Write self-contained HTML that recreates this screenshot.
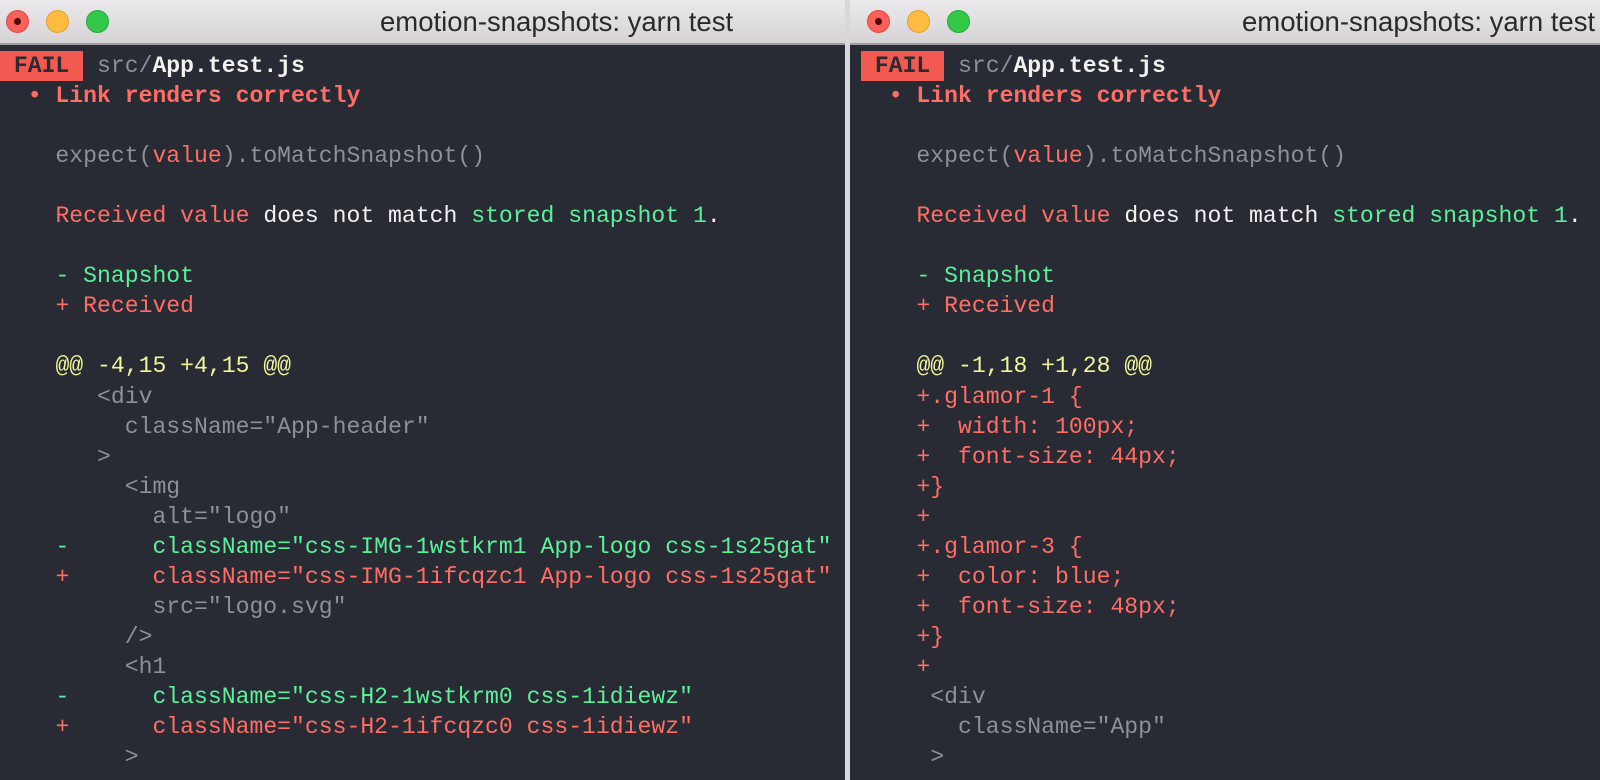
<!DOCTYPE html>
<html><head><meta charset="utf-8"><style>
html,body{margin:0;padding:0;width:1600px;height:780px;overflow:hidden;background:#282b34}
.win{position:absolute;top:0;height:780px;overflow:hidden;background:#282b34}
.tb{position:absolute;left:0;right:0;top:0;height:43px;background:linear-gradient(#ebe9eb,#d5d3d5);border-bottom:2px solid #9f9d9f}
.dot{position:absolute;top:10px;width:23px;height:23px;border-radius:50%;box-sizing:border-box}
.r{background:#fc605b;border:1px solid #de4b45}.r::after{content:"";position:absolute;left:7px;top:7px;width:7px;height:7px;border-radius:50%;background:#4d0000}
.y{background:#fdbc40;border:1px solid #dea23a}.g{background:#34c84a;border:1px solid #27a83a}
.title{position:absolute;top:5px;font:27.5px/34px "Liberation Sans",sans-serif;color:#2a2a2a;white-space:nowrap}
pre{position:absolute;top:51px;margin:0;font:23.1px/30.05px "Liberation Mono",monospace;color:#8b9099;white-space:pre}
.F{background:#f25a51;color:#2a2b33;font-weight:bold;display:inline-block;line-height:30px;height:30px}
.w{color:#f2f2f0}.b{font-weight:bold}.R{color:#ff6e66}.G{color:#5cf09a}.Y{color:#f1f59a}
</style></head><body>
<div class="win" style="left:0;width:845px">
<div class="tb"></div>
<div class="dot r" style="left:6px"></div><div class="dot y" style="left:46px"></div><div class="dot g" style="left:86px"></div>
<div class="title" style="left:380px">emotion-snapshots: yarn test</div>
<pre><span class="F"> FAIL </span> src/<span class="w b">App.test.js</span>
<span class="R b">  • Link renders correctly</span>

    expect(<span class="R">value</span>).toMatchSnapshot()

    <span class="R">Received value</span> <span class="w">does not match</span> <span class="G">stored snapshot 1</span><span class="w">.</span>

    <span class="G">- Snapshot</span>
    <span class="R">+ Received</span>

    <span class="Y">@@ -4,15 +4,15 @@</span>
       &lt;div
         className="App-header"
       &gt;
         &lt;img
           alt="logo"
    <span class="G">-      className="css-IMG-1wstkrm1 App-logo css-1s25gat"</span>
    <span class="R">+      className="css-IMG-1ifcqzc1 App-logo css-1s25gat"</span>
           src="logo.svg"
         /&gt;
         &lt;h1
    <span class="G">-      className="css-H2-1wstkrm0 css-1idiewz"</span>
    <span class="R">+      className="css-H2-1ifcqzc0 css-1idiewz"</span>
         &gt;</pre>
</div>
<div style="position:absolute;left:845px;top:0;width:5px;height:780px;background:#d9d8d9"></div>
<div class="win" style="left:850px;width:750px">
<div class="tb"></div>
<div class="dot r" style="left:17px"></div><div class="dot y" style="left:57px"></div><div class="dot g" style="left:97px"></div>
<div class="title" style="left:392px">emotion-snapshots: yarn test</div>
<pre style="left:11px"><span class="F"> FAIL </span> src/<span class="w b">App.test.js</span>
<span class="R b">  • Link renders correctly</span>

    expect(<span class="R">value</span>).toMatchSnapshot()

    <span class="R">Received value</span> <span class="w">does not match</span> <span class="G">stored snapshot 1</span><span class="w">.</span>

    <span class="G">- Snapshot</span>
    <span class="R">+ Received</span>

    <span class="Y">@@ -1,18 +1,28 @@</span>
<span class="R">    +.glamor-1 {
    +  width: 100px;
    +  font-size: 44px;
    +}
    +
    +.glamor-3 {
    +  color: blue;
    +  font-size: 48px;
    +}
    +</span>
     &lt;div
       className="App"
     &gt;</pre>
</div>
</body></html>
